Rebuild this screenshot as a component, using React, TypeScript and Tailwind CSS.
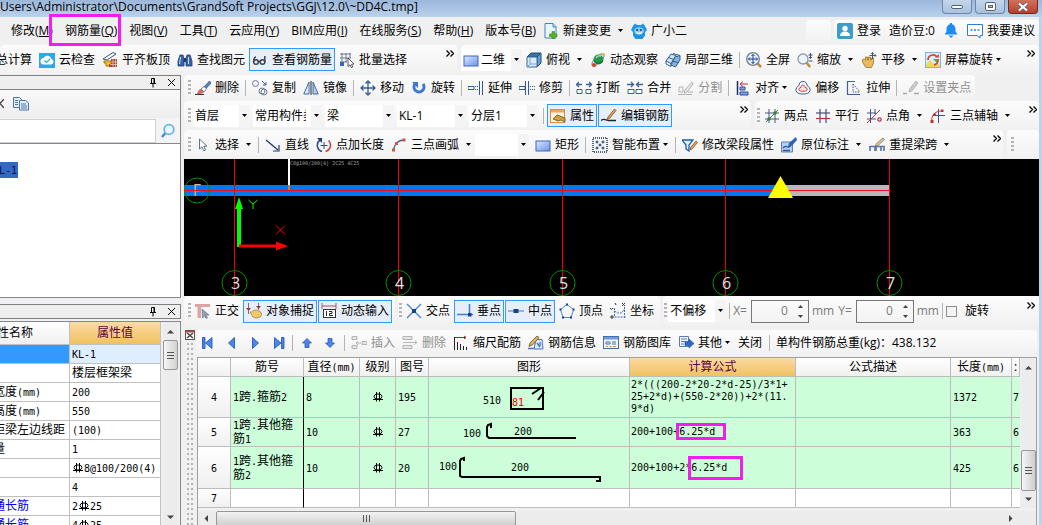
import type { ReactNode } from "react";

const NAVY = "#34507f";

// 16x16 toolbar drawings
const ICONS: Record<string, ReactNode> = {
  cloudCheck: (
    <>
      <rect width="16" height="15" y="1" fill="#2fa9e6" />
      <path d="M4 12.5h8a2.8 2.8 0 0 0 .4-5.5A4.2 4.2 0 0 0 4.6 6 3.3 3.3 0 0 0 4 12.5z" fill="#fff" />
      <path d="M5.5 8.5l2 2 3.5-3.5" fill="none" stroke="#2fa9e6" strokeWidth="1.2" />
    </>
  ),
  slab: (
    <>
      <path d="M1 7L11 .500l3 1.500L5 8z" fill="#fff" stroke={NAVY} />
      <path d="M2 9h7v5H4V11H2z" fill="#f2c233" stroke="#a87400" />
      <path d="M9 7h6v8H7v-3h2z" fill="#a8452f" />
      <path d="M9 10h6M8 12.500h7M11 7v8M13.500 7v8" stroke="#f0d5c5" strokeWidth=".7" />
    </>
  ),
  binoculars: (
    <>
      <path d="M3 3h3l1 4v7H1V9zM10 3h3l2 6v5H9V7z" fill="#3a64a8" stroke="#1f3a6e" strokeWidth=".8" />
      <path d="M7 6h2v4H7z" fill="#1f3a6e" />
      <path d="M3.500 5L2.500 12M11.500 5v7" stroke="#c9dcf7" />
    </>
  ),
  glasses: (
    <g fill="none" stroke="#3c4350" strokeWidth="1.500">
      <circle cx="4" cy="10" r="2.300" />
      <circle cx="10.500" cy="10" r="2.300" />
      <path d="M1.700 10C1.500 7 2.500 5 4 5M12.800 10.500V4M6.300 9.500h2" />
    </g>
  ),
  batch: (
    <>
      <path d="M1 2h11M1 6h11M1 10h7M3 1v13M7 1v9M11 1v5" stroke="#6e7b92" fill="none" />
      <path d="M1 10h4v4H1z" fill="#3c62c8" />
      <path d="M9 6l6 6-2.500.3 1.200 2.700-1.500.5-1.200-2.700L9 14.500z" fill="#fff" stroke="#333" strokeWidth=".8" />
    </>
  ),
  rect: (
    <>
      <defs>
        <linearGradient id="rectFill" x1="0" y1="0" x2="1" y2="1">
          <stop offset="0" stopColor="#dbe8ff" />
          <stop offset="1" stopColor="#6d93e8" />
        </linearGradient>
      </defs>
      <rect x="1" y="4" width="14" height="10" fill="url(#rectFill)" stroke="#4065bb" />
    </>
  ),
  cube: (
    <>
      <path d="M1 5l4-4h10L11 5z" fill="#3b72a8" stroke="#1c4f82" />
      <path d="M11 5l4-4v10l-4 4z" fill="#6a9cc9" stroke="#1c4f82" />
      <path d="M1 5h10v10H1z" fill="#d9ebf9" stroke="#356a9f" />
      <path d="M4 5v7h7M4 12l-3 3" stroke="#7fa7cc" fill="none" />
    </>
  ),
  orbit: (
    <>
      <ellipse cx="8" cy="8" rx="8" ry="3" transform="rotate(-45 8 8)" fill="none" stroke="#8f9aa5" />
      <circle cx="8.500" cy="7.500" r="5" fill="#27964c" />
      <path d="M6 6c1-2 3-2.500 5-2" stroke="#9be0ae" strokeWidth="1.500" fill="none" />
      <circle cx="4" cy="13" r="2" fill="#d2402e" />
      <circle cx="13.500" cy="2.500" r="1.500" fill="#e8b83a" />
      <path d="M4 9c2 3 6 3 9 0" stroke="#0d5d2a" fill="none" />
    </>
  ),
  local3d: (
    <g stroke="#2d5f8f" fill="#cfe3f4">
      <path d="M1 9l5-7 5 1.500-5 8z" />
      <path d="M6 13l4-8 5-1.500V8l-4.500 7z" fill="#8ab2d8" />
      <path d="M3.500 5.500l5 2M1 9v3l5 2.500V11.500M8 1.500l7 2M8 9.500l6 1" fill="none" />
    </g>
  ),
  zoomAll: (
    <>
      <path d="M11.500 11.500L15 15" stroke="#c28b3a" strokeWidth="2.500" />
      <circle cx="7" cy="7" r="6.300" fill="#e6effa" stroke="#6f7d91" strokeWidth="1.300" />
      <path d="M7 2.500v9M2.500 7h9M5.500 4L7 2.500 8.500 4M5.500 10L7 11.500 8.500 10M4 5.500L2.500 7 4 8.500M10 5.500L11.500 7 10 8.500" stroke="#1f3f94" fill="none" />
    </>
  ),
  zoom: (
    <>
      <path d="M9.500 10.500L13 15" stroke="#c28b3a" strokeWidth="2.500" />
      <circle cx="6" cy="7" r="5" fill="#eef5fc" stroke="#909bab" strokeWidth="1.300" />
      <path d="M13.500 1v5M11.500 3h4M11.500 9h4M12 5l1.500 1.500L15 5" stroke="#34507f" fill="none" />
    </>
  ),
  hand: (
    <>
      <path d="M1 8l2-1 1.500 1V5h2v3h1V5h2v3h1V6h2v5l-2 4.500H5L2 11z" fill="#e6bb62" stroke="#9b7227" strokeWidth=".8" />
      <path d="M11.500 .500V7M8.500 3.500h6.500M10.200 2L11.500.500 12.800 2M13.700 2.200L15 3.500l-1.300 1.300" stroke="#46546d" fill="none" />
    </>
  ),
  screenRotate: (
    <>
      <rect x=".500" y=".500" width="15" height="15" fill="#d7efff" stroke="#79b8dc" />
      <path d="M1 12l4-4 4 4 3-2 3 3v2H1z" fill="#f4d564" />
      <path d="M3 8a5 5 0 0 1 9-3M13 7a5 5 0 0 1-4 6" stroke="#df4030" strokeWidth="1.800" fill="none" />
      <path d="M10 5.500h4V2z" fill="#df4030" />
      <path d="M8 7h4v4z" fill="#54a84c" />
    </>
  ),
  newDoc: (
    <>
      <path d="M2 .500h8l3 3V15H2z" fill="#eaf4fd" stroke="#3e8ab8" />
      <path d="M10 .500V4h3" fill="#bcdcf1" stroke="#3e8ab8" />
      <path d="M9 8.500h2.500V11H14v2.500h-2.500V16H9v-2.500H6.500V11H9z" fill="#58b324" stroke="#3b8614" strokeWidth=".6" />
    </>
  ),
  mascot: (
    <>
      <path d="M4 .500l2 1.500h4L12 .500l2 2.500 2 4-2 2v3.500L11.500 16h-7L2 12.500V9L0 7l2-4z" fill="#1f93e6" />
      <ellipse cx="8" cy="8" rx="4.800" ry="3.800" fill="#8fd0fa" />
      <circle cx="6.200" cy="7" r="1.100" fill="#0e3f6e" />
      <circle cx="9.800" cy="7" r="1.100" fill="#0e3f6e" />
      <path d="M5.500 9.300c1 1.500 4 1.500 5 0" stroke="#fff" strokeWidth="1.200" fill="none" />
    </>
  ),
  user: (
    <>
      <rect width="16" height="16" rx="2" fill="#3f9bcb" />
      <circle cx="8" cy="5.500" r="2.700" fill="#fff" />
      <path d="M3 13c0-3 2-4.500 5-4.500s5 1.500 5 4.500z" fill="#fff" />
    </>
  ),
  bell: <path d="M8 0c.9 0 1.200.6 1.200 1.200C11.500 2 12.500 4 12.500 6.500v2L14.500 11.500h-13L3.500 8.500v-2C3.500 4 4.500 2 6.800 1.200 6.800.6 7.100 0 8 0zM5.500 12.500h5L8 15z" fill="#1e8bf3" />,
  comment: (
    <>
      <path d="M.500 1.500h15v11H13V15l-3-2.500H.500z" fill="#fff" stroke="#2d7dd2" />
      <path d="M3.500 7h2M7 7h2M10.500 7h2" stroke="#2d7dd2" strokeWidth="1.300" />
    </>
  ),
  brush: (
    <>
      <path d="M14.500 1L9 7l2 1.500L16 3z" fill="#4f7fc4" stroke="#2b4c86" strokeWidth=".7" />
      <path d="M9 6.500L6 9l3 3 2.500-3.500z" fill="#fff" stroke="#2b4c86" strokeWidth=".7" />
      <path d="M6 9c-2 0-3 2-4 5 3 0 6 0 7-2z" fill="#d46a63" />
      <path d="M0 14.500h9" stroke="#333" />
    </>
  ),
  copy2: (
    <>
      <circle cx="3.500" cy="3.500" r="3" fill="#f3f6fa" stroke="#6d7b90" />
      <circle cx="10" cy="11" r="3" fill="#f3f6fa" stroke="#6d7b90" />
      <circle cx="12" cy="12" r="3" fill="none" stroke="#6d7b90" />
      <path d="M10 1l4 4M14 2v3h-3" stroke="#2b5bb0" fill="none" />
    </>
  ),
  mirror: (
    <g stroke="#3f6aa5" fill="none">
      <path d="M6 2v12H.800z" fill="#e3edf9" />
      <path d="M10 2v12h5.200z" fill="#b7cdeb" />
      <path d="M8 1v14" stroke="#222" />
    </g>
  ),
  move: <path d="M8 1v14M1 8h14M5.500 3.500L8 1l2.500 2.500M5.500 12.500L8 15l2.500-2.500M3.500 5.500L1 8l2.500 2.500M12.500 5.500L15 8l-2.500 2.500" stroke="#3a5d8f" strokeWidth="1.300" fill="none" />,
  rotate: (
    <>
      <path d="M4 4a5 5 0 1 0 8 0" stroke="#3a78d6" strokeWidth="3" fill="none" />
      <path d="M1 2h6v6z" fill="#3a78d6" />
    </>
  ),
  extend: (
    <>
      <path d="M0 6.500h6v3H0z" fill="#fff" stroke="#2f5c99" />
      <path d="M7 6.500h4M7 9.500h4" stroke="#2f5c99" strokeDasharray="1 1" />
      <path d="M11.500 1v14M14.500 1v14" stroke="#2f5c99" />
    </>
  ),
  trim: (
    <>
      <path d="M0 6.500h6v3H0z" fill="#fff" stroke="#2f5c99" />
      <path d="M6.500 1v14M9.500 1v14" stroke="#2f5c99" />
      <path d="M11 6.500h5M11 9.500h5" stroke="#2f5c99" strokeDasharray="1 1" />
    </>
  ),
  breakIcon: (
    <g stroke="#3f6297" fill="none">
      <path d="M1 9.500h5v4H1zM10 9.500h5v4h-5z" fill="#fff" />
      <path d="M0 4.500h6M10 4.500h6M3 2L.500 4.500 3 7M13 2l2.500 2.500L13 7" strokeWidth="1.300" />
    </g>
  ),
  merge: (
    <g stroke="#3f6297" fill="none">
      <path d="M1 9.500h6v4H1zM9 9.500h6v4H9z" fill="#fff" />
      <path d="M0 4.500h6M10 4.500h6M4 2l2.500 2.500L4 7M12 2L9.500 4.500 12 7" strokeWidth="1.300" />
    </g>
  ),
  split: (
    <g stroke="#b3b3b3" fill="none">
      <path d="M1 7h4v5H1zM10 12h5M0 14.500h14" />
      <path d="M14 2L7 10l-1 3 3-1 6-8z" fill="#e8e8e8" />
    </g>
  ),
  align: (
    <>
      <path d="M2.500 1v14" stroke="#1e2c63" strokeWidth="1.500" />
      <path d="M5 7h5v3H5zM5 12h8v3H5z" fill="#7da4e4" stroke="#2e4fa3" />
      <path d="M13 4H5M8 1.500L5 4l3 2.500" stroke="#c4303a" fill="none" />
    </>
  ),
  offset: (
    <>
      <path d="M8 1.500c3 0 4 2 4 4 2 1 3.500 3 3 5-.5 3-4 3.500-7 3.500s-6.500-.5-7-3.500c-.4-2 1-4 3-5 0-2 1-4 4-4z" fill="#f5f8fc" stroke="#3d5f9c" />
      <path d="M8 5c1.500 0 2 1.500 2 2.500 1.500 0 2.500 1 2 2.500-.3 1-2 1.300-4 1.300S4.300 11 4 10c-.4-1.500.5-2.500 2-2.500C6 6.500 6.500 5 8 5z" fill="#fbe3df" stroke="#d0402f" />
    </>
  ),
  stretch: (
    <>
      <path d="M9 1.500H1.500v13H14" stroke="#3d5f9c" strokeWidth="1.200" fill="none" />
      <path d="M7 4v8h7M7 4l7 8" stroke="#3d5f9c" strokeDasharray="1.500 1" fill="none" />
    </>
  ),
  grip: (
    <>
      <path d="M0 13.500h4M11 13.500h5" stroke="#a9a9a9" strokeWidth="1.500" />
      <path d="M13 1l2 2-6 8-3 1 .500-3z" fill="#c9c9c9" stroke="#a9a9a9" strokeWidth=".7" />
    </>
  ),
  props: (
    <>
      <rect x=".500" y="1.500" width="14" height="13" fill="#fff4e5" stroke="#e28b3a" />
      <path d="M1 2h13v2.500H1z" fill="#f1a55a" />
      <path d="M3 11l4-4 3 1 5 2v4l-4-2-3 1z" fill="#c9a23c" stroke="#6b5216" strokeWidth=".8" />
    </>
  ),
  editBar: (
    <>
      <path d="M0 12.500c3-3 5 0 8 0h7" stroke="#222" strokeWidth="1.300" fill="none" />
      <path d="M13.500 1l1.500 1.500L9 10l-3 1.500L7 9z" fill="#e0a25a" stroke="#74431b" strokeWidth=".7" />
    </>
  ),
  axisTwo: (
    <>
      <path d="M1 5h14M1 11h14M5 1v14M11 1v14" stroke="#4a5a86" />
      <path d="M2 14L14 2" stroke="#3a7d34" />
      <circle cx="5" cy="11" r="1.700" fill="#3a7d34" />
      <circle cx="11" cy="5" r="1.700" fill="#3a7d34" />
    </>
  ),
  axisParallel: (
    <>
      <path d="M5 1v14M11 1v14" stroke="#3b538a" strokeWidth="1.200" />
      <path d="M1 5h14" stroke="#3b538a" strokeWidth="1.200" />
      <path d="M1 10.500h14" stroke="#b6323a" strokeWidth="1.200" />
    </>
  ),
  axisAngle: (
    <>
      <path d="M1 5h9M1 11h9M4.500 1v14M9 1v5" stroke="#3b538a" />
      <path d="M1 15L14 2" stroke="#b6323a" />
      <circle cx="13.500" cy="11.500" r="1.700" fill="none" stroke="#c4303a" strokeWidth="1.300" />
    </>
  ),
  axisArc: (
    <>
      <path d="M8.500 1v14M3 7.500h12" stroke="#3b538a" />
      <path d="M2 13c-1-6 3-10 10-10" stroke="#c4303a" fill="none" />
      <path d="M.500 12h3v3h-3zM11 1.500h2.500V4H11zM3.500 5.500H6V8H3.500z" fill="#c4303a" />
    </>
  ),
  pointer: <path d="M4.500 2v10l2.500-2.200 1.700 4 1.800-.8L8.800 9.200H12z" fill="#fff" stroke="#5b6e94" />,
  line: (
    <>
      <path d="M1 3l12 10" stroke="#1f3b7c" strokeWidth="1.400" />
      <path d="M14 8v6H8" stroke="#1f3b7c" fill="none" strokeWidth="1.200" />
    </>
  ),
  pointLen: (
    <>
      <path d="M4 3a6.500 6.500 0 0 0 2 11.500" stroke="#2d4f93" strokeWidth="1.600" fill="none" />
      <path d="M12.500 3.500a6.500 6.500 0 0 1-3 11" stroke="#c4474a" strokeWidth="1.600" fill="none" />
      <path d="M1 1h5v5z" fill="#1f3b7c" />
      <path d="M8 5v7M4.500 8.500h7" stroke="#34507f" />
    </>
  ),
  arc3: (
    <>
      <path d="M2.500 13C3 8 7 3 13 3" stroke="#46639a" strokeWidth="1.300" fill="none" />
      <path d="M1 11.500h3v3H1zM4 5h3v3H4zM11.500 1.500h3v3h-3z" fill="#d2553f" />
    </>
  ),
  smart: (
    <>
      <rect x="1" y="1" width="14" height="14" fill="#f4f8ff" stroke="#1d2c54" strokeDasharray="1 1" strokeWidth="1.500" />
      <path d="M5 3.500v3M3.500 5h3M11 3.500v3M9.500 5h3M5 9.500v3M3.500 11h3M11 9.500v3M9.500 11h3M8 6.500v3M6.500 8h3" stroke="#1d2c54" />
    </>
  ),
  beamEdit: (
    <>
      <path d="M0 3h11L7 8v6l-3-2V8z" fill="#dff0fb" stroke="#1f5fa8" strokeWidth="1.300" />
      <path d="M14 4l1.500 1.500L10 12l-2 1 .500-2.500z" fill="#e0a25a" stroke="#74431b" strokeWidth=".7" />
    </>
  ),
  inPlace: (
    <>
      <path d="M.500 5h11v10H.500z" fill="#b9cff0" stroke="#5c7fb8" />
      <path d="M2 11c3-4 4 1 8-2M2 13.500h7" stroke="#2b57a5" strokeWidth="1.400" fill="none" />
      <path d="M15 0L8 6l-1 4 4-1.500L16 3z" fill="#2f64b5" />
    </>
  ),
  respan: (
    <>
      <path d="M1 14V9.500h5V14M7 14V9.500h5V14M12 9.500h3V14" stroke="#5874a8" strokeWidth="1.600" fill="none" />
      <path d="M14 1l1.500 1.500L9 8.500 6.500 9l.800-2.300z" fill="#d9c7a1" stroke="#7b6a48" strokeWidth=".7" />
    </>
  ),
  ortho: (
    <>
      <path d="M0 1h15v3H6v11H2.500V4H0z" fill="#dfa3a3" />
      <path d="M7 6l7 6-3 .300 1.500 2.500-1.500.700L9.700 13 7.500 15z" fill="#8fa0b5" stroke="#5b6c84" strokeWidth=".6" />
    </>
  ),
  snap: (
    <>
      <path d="M2.500 0v11M12.500 0v7" stroke="#b05a5a" />
      <path d="M0 5h5l-2.500 3zM10 3h5l-2.500 3z" fill="#8e3f46" />
      <path d="M4 9c2 1 3-2 5-2 3 0 3 1 5 1.500 2.500 1.500 2 5-1 6-3 1-6 .5-7-2z" fill="#efca69" stroke="#a07a27" strokeWidth=".7" />
    </>
  ),
  dynInput: (
    <>
      <path d="M1 0v6M15 0v6M1 3h14" stroke="#b0585c" />
      <rect x="2.500" y="6.500" width="12" height="8" fill="#fff" stroke="#333" />
      <path d="M5.500 8v5M8 8.500h3v2H8.500v2H12" stroke="#222" fill="none" />
    </>
  ),
  cross: (
    <>
      <path d="M1 1l14 14M15 1L1 15" stroke="#3f7fd0" strokeWidth="1.200" />
      <rect x="6" y="6" width="4" height="4" fill="#15418f" />
    </>
  ),
  perp: (
    <>
      <path d="M0 11.500h16M12.500 1v11" stroke="#3f7fd0" strokeWidth="1.500" />
      <rect x="11" y="10" width="3.500" height="3.500" fill="#15418f" />
    </>
  ),
  mid: (
    <>
      <path d="M0 8h16" stroke="#6fa1df" strokeWidth="1.500" />
      <rect x="5.500" y="6" width="5" height="4" fill="#15418f" />
    </>
  ),
  vertex: (
    <>
      <path d="M8 1.500l6.500 5L12 14.500H4L1.500 6.500z" fill="none" stroke="#4a8ad0" />
      <path d="M7 .500h2v2H7zM.500 5.500h2v2h-2zM13.500 5.500h2v2h-2zM3 13.500h2v2H3zM11 13.500h2v2h-2z" fill="#15418f" />
    </>
  ),
  coord: (
    <>
      <path d="M4.500 5v9H16M4.500 8l3 2h4l3-4M14.500 4v11" stroke="#3f6fb5" fill="none" strokeDasharray="2 1" />
      <path d="M5 0l1 2M12 0l3 3M15 0l-3 3M0 5l1.500 1.500L3 5M1 13h2v2H1z" stroke="#333" fill="none" />
    </>
  ),
  insert: (
    <g stroke="#b5b5b5" fill="#e5e5e5">
      <path d="M1 1.500h5v3H1zM1 10.500h5v3H1zM11 6.500h5v3h-5z" />
      <path d="M10 8H5M7 6L5 8l2 2" fill="none" />
    </g>
  ),
  removeRow: (
    <g stroke="#b5b5b5" fill="#e5e5e5">
      <path d="M1 1.500h9v3H1zM1 10.500h9v3H1z" />
      <path d="M1 7.500h14M12.500 5.500l2.500 2-2.500 2" fill="none" />
    </g>
  ),
  scaleBar: (
    <>
      <path d="M1 2.500h12M11 1l2 1.500L11 4" stroke="#8e2f2f" fill="none" />
      <path d="M1.500 2v13M4.500 7v8M7.500 9v6M10.500 11v4M13.500 12v3" stroke="#222" />
    </>
  ),
  barInfo: (
    <>
      <path d="M8 4.500h6l1 9.500H6z" fill="#dbe8fb" stroke="#4b76bd" />
      <path d="M9 1l2 1.500-6 7L1 11.500 2 8z" fill="#e5b562" stroke="#6b4e20" strokeWidth=".8" />
      <path d="M0 13.500h6M9 8l3 4M12 7v4" stroke="#4b76bd" strokeWidth="1.300" />
    </>
  ),
  library: (
    <>
      <rect x=".500" y="1.500" width="15" height="12" fill="#f1f6fd" stroke="#4470b5" />
      <path d="M1 2h14v2.500H1z" fill="#6f9ade" />
      <path d="M3 7h4v2H3zM9 7h4M9 9h4" stroke="#4470b5" fill="none" />
      <path d="M3 11.500h2M6.500 11.500h2M10 11.500h3" stroke="#d28c3a" />
    </>
  ),
  other: (
    <>
      <path d="M1.500 1.500h9v10h-9z" fill="#f1f6fd" stroke="#5b7db5" />
      <path d="M3 4h6M3 6.500h4M3 9h3" stroke="#5b7db5" />
      <path d="M7 6.500h4V4l5 4.500-5 4.500v-2.500H7z" fill="#2e68c9" stroke="#1c4a9b" strokeWidth=".6" />
    </>
  ),
  first: <path d="M1.500 2.500H4v11H1.500zM11 2.500v11L4.500 8z" fill="#4a86ec" stroke="#1b4cae" strokeWidth=".8" />,
  prev: <path d="M10.500 2.500v11L4.500 8z" fill="#4a86ec" stroke="#1b4cae" strokeWidth=".8" />,
  next: <path d="M5.500 2.500v11l6-5.500z" fill="#4a86ec" stroke="#1b4cae" strokeWidth=".8" />,
  last: <path d="M11.500 2.500H14v11h-2.500zM4.500 2.500v11L11 8z" fill="#4a86ec" stroke="#1b4cae" strokeWidth=".8" />,
  up: <path d="M8 3.500l4.500 4.500H10v4.500H6V8H3.500z" fill="#4a86ec" stroke="#1b4cae" strokeWidth=".7" />,
  down: <path d="M8 12.500L3.500 8H6V3.500h4V8h2.500z" fill="#4a86ec" stroke="#1b4cae" strokeWidth=".7" />,
  copyDoc: (
    <g fill="#e4eefb" stroke="#4b74ad">
      <path d="M.500 1.500h6l2 2v8h-8z" />
      <path d="M6.500 4.500h6l3 2.500v7h-9z" />
      <path d="M8 8h5M8 10h6M8 12h6M2 4.500h3M2 6.500h3M2 8.500h3" />
    </g>
  ),
  search: (
    <>
      <path d="M5.500 10L2 14" stroke="#3e8ed0" strokeWidth="2.500" />
      <circle cx="9" cy="6.500" r="4.800" fill="#e9f6ff" stroke="#6db3e6" strokeWidth="1.800" />
    </>
  ),
};

const Icon = ({ name }: { name: string }) => (
  <svg width="16" height="16" viewBox="0 0 16 16" className="shrink-0" aria-hidden="true">
    {ICONS[name]}
  </svg>
);

const Arrow = ({ className = "" }: { className?: string }) => (
  <svg width="7" height="4" viewBox="0 0 7 4" className={`shrink-0 ${className}`} aria-hidden="true">
    <path d="M1 0h5L3.500 3z" fill="#000" />
  </svg>
);

type ToolProps = { icon: string; label: string; arrow?: "wide" | "tight"; on?: boolean; off?: boolean };

function Tool({ icon, label, arrow, on, off }: ToolProps) {
  return (
    <button
      type="button"
      disabled={off}
      aria-pressed={on}
      className={`flex shrink-0 items-center gap-1 whitespace-nowrap ${
        on ? "-mx-[3px] h-[23px] border border-[#3399ff] bg-[#e5eef9] px-[2px]" : ""
      } ${off ? "text-[#8f8f8f]" : ""}`}
    >
      <Icon name={icon} />
      {label}
      {arrow === "wide" && <Arrow className="ml-[2px]" />}
      {arrow === "tight" && <Arrow className="-ml-[2px]" />}
    </button>
  );
}

const IconButton = ({ icon, label }: { icon: string; label: string }) => (
  <button type="button" aria-label={label} className="shrink-0">
    <Icon name={icon} />
  </button>
);

const Sep = () => <span className="-mx-px h-4 w-px shrink-0 bg-[#b4b4b4]" />;

const Grip = () => (
  <span className="-mr-[3px] h-4 w-[3px] shrink-0 bg-[repeating-linear-gradient(to_bottom,#b4b4b4_0,#b4b4b4_2px,transparent_2px,transparent_4px)]" />
);

const More = () => (
  <button type="button" aria-label="More" className="mb-3 ml-auto shrink-0">
    <svg width="8" height="7" viewBox="0 0 8 7" aria-hidden="true">
      <path d="M.500.500l3 3-3 3M4.500.500l3 3-3 3" fill="none" stroke="#000" strokeWidth="1.300" />
    </svg>
  </button>
);

const Strip = ({ children, className = "gap-[7px]" }: { children?: ReactNode; className?: string }) => (
  <div className={`flex items-center rounded-sm bg-linear-to-b from-[#fcfcfc] to-[#f1f1f1] ${className}`}>
    {children}
  </div>
);

function Combo({ value, label, className }: { value: string; label: string; className: string }) {
  return (
    <span className={`relative flex h-[22px] shrink-0 items-center bg-white ${className}`}>
      <select
        aria-label={label}
        defaultValue={value}
        className="h-full w-full appearance-none overflow-hidden bg-transparent pr-4 pl-[2px] outline-none"
      >
        <option>{value}</option>
      </select>
      <span className="pointer-events-none absolute inset-y-0 right-0 flex w-[11px] items-center justify-center bg-[#f4f4f4]">
        <Arrow />
      </span>
    </span>
  );
}

// rebar grade mark used in front of diameters
const Grade = () => (
  <svg width="12" height="10" viewBox="0 0 12 10" className="inline-block align-[-1px]" role="img" aria-label="HRB400">
    <path d="M4.500 0v9.500M7.500 0v9.500M1 7.500h10" stroke="#000" fill="none" />
    <ellipse cx="6" cy="4.500" rx="4" ry="2.500" fill="none" stroke="#000" />
  </svg>
);

// grid text: 12px Chinese beside half-width Latin, "#" stands for the grade mark
function GridText({ text }: { text: string }) {
  return (
    <>
      {text.split(/([\x21\x22\x24-\x7e]+|#)/).map((part, i) => {
        if (part === "#") return <Grade key={i} />;
        if (/^[\x20-\x7e]+$/.test(part))
          return (
            <span key={i} className="font-['DejaVu_Sans_Mono',monospace] text-[10px] leading-3">
              {part}
            </span>
          );
        return part;
      })}
    </>
  );
}

const MENUS: [string, string][] = [
  ["修改", "M"],
  ["钢筋量", "Q"],
  ["视图", "V"],
  ["工具", "T"],
  ["云应用", "Y"],
  ["BIM应用", "I"],
  ["在线服务", "S"],
  ["帮助", "H"],
  ["版本号", "B"],
];

function TitleBar() {
  return (
    <header className="flex h-[17px] shrink-0 items-start justify-between bg-linear-to-b from-[#9bb7da] to-[#b9d1ec] leading-[14px]">
      <h1 className="whitespace-nowrap">Users\Administrator\Documents\GrandSoft Projects\GGJ\12.0\~DD4C.tmp]</h1>
      <div className="mr-1 flex gap-[3px]">
        <button type="button" aria-label="Minimize" className="flex h-[14px] w-[30px] items-center justify-center rounded-b-sm border border-t-0 border-[#6f86a6] bg-linear-to-b from-[#c4d6ea] to-[#a9c2df]">
          <span className="h-1 w-3 rounded-xs border border-[#566171] bg-white" />
        </button>
        <button type="button" aria-label="Restore" className="flex h-[14px] w-[30px] items-center justify-center rounded-b-sm border border-t-0 border-[#6f86a6] bg-linear-to-b from-[#c4d6ea] to-[#a9c2df]">
          <span className="flex h-[9px] w-[11px] items-center justify-center rounded-xs border border-[#566171] bg-white">
            <span className="h-[3px] w-[5px] border border-[#566171] bg-[#a9c2df]" />
          </span>
        </button>
        <button type="button" aria-label="Close" className="flex h-[14px] w-[30px] items-center justify-center rounded-b-sm border border-t-0 border-[#6b2a22] bg-linear-to-b from-[#d0705c] to-[#b8402a]">
          <svg width="12" height="10" viewBox="0 0 12 10" aria-hidden="true">
            <path d="M2 1.500l8 7M10 1.500l-8 7" stroke="#566171" strokeWidth="3.600" />
            <path d="M2 1.500l8 7M10 1.500l-8 7" stroke="#fff" strokeWidth="2.200" />
          </svg>
        </button>
      </div>
    </header>
  );
}

function MenuBar() {
  return (
    <nav className="flex h-7 shrink-0 items-center gap-[7px] pl-[11px]">
      <div className="flex shrink-0 gap-3">
        {MENUS.map(([label, key]) => (
          <button key={key} type="button" className="relative shrink-0 whitespace-nowrap">
            {label}(<u>{key}</u>)
            {key === "Q" && (
              <span className="pointer-events-none absolute -top-[9px] -right-1 -bottom-[7px] -left-4 z-10 border-[3px] border-[#f41df0]" />
            )}
          </button>
        ))}
      </div>
      <Tool icon="newDoc" label="新建变更" arrow="wide" />
      <Tool icon="mascot" label="广小二" />
      <div className="ml-auto flex gap-[3px]">
        <Strip className="h-[23px] w-[25px]" />
        <Strip className="h-[23px] gap-2 pr-1 pl-[3px]">
          <Tool icon="user" label="登录" />
          <span className="whitespace-nowrap">造价豆:0</span>
          <IconButton icon="bell" label="消息" />
          <Tool icon="comment" label="我要建议" />
        </Strip>
      </div>
    </nav>
  );
}

function MainToolbar() {
  return (
    <div className="flex h-[29px] shrink-0 gap-1">
      <Strip className="w-[457px] shrink-0 gap-[7px] pr-[3px]">
        <button type="button" className="-ml-1 shrink-0 whitespace-nowrap">
          总计算
        </button>
        <Tool icon="cloudCheck" label="云检查" />
        <Tool icon="slab" label="平齐板顶" />
        <Tool icon="binoculars" label="查找图元" />
        <Tool icon="glasses" label="查看钢筋量" on />
        <Tool icon="batch" label="批量选择" />
        <More />
      </Strip>
      <Strip className="flex-1 gap-[7px] pr-1">
        <span className="relative -mr-[3px] flex h-[23px] shrink-0 items-center bg-white pl-[2px]">
          <Icon name="rect" />
          <Combo label="视图模式" value="二维" className="w-[43px]" />
        </span>
        <Tool icon="cube" label="俯视" arrow="wide" />
        <Tool icon="orbit" label="动态观察" />
        <Tool icon="local3d" label="局部三维" />
        <Sep />
        <Tool icon="zoomAll" label="全屏" />
        <Tool icon="zoom" label="缩放" arrow="wide" />
        <Tool icon="hand" label="平移" arrow="wide" />
        <Tool icon="screenRotate" label="屏幕旋转" arrow="tight" />
        <More />
      </Strip>
    </div>
  );
}

const PanelHeader = () => (
  <div className="flex h-[15px] shrink-0 items-center justify-end gap-[10px] border border-l-0 border-[#7f7f7f] bg-[#efefef] pr-1">
    <button type="button" aria-label="Pin">
      <svg width="8" height="10" viewBox="0 0 8 10" aria-hidden="true">
        <path d="M2.500.500h3v5h-3zM5 .500v5M1 5.500h6M4 6v3.500" stroke="#000" fill="none" />
      </svg>
    </button>
    <button type="button" aria-label="Close panel">
      <svg width="9" height="9" viewBox="0 0 9 9" aria-hidden="true">
        <path d="M1 1l7 7M8 1L1 8" stroke="#000" fill="none" />
      </svg>
    </button>
  </div>
);

const ThumbLines = ({ vertical }: { vertical?: boolean }) => (
  <svg width="9" height="9" viewBox="0 0 9 9" aria-hidden="true">
    <path d={vertical ? "M1 1.500h7M1 4.500h7M1 7.500h7" : "M1.500 1v7M4.500 1v7M7.500 1v7"} stroke="#555" />
  </svg>
);

const Caret = ({ d }: { d: string }) => (
  <svg width="7" height="7" viewBox="0 0 7 7" aria-hidden="true">
    <path d={d} fill="#444" />
  </svg>
);

const PROPS: { name: string; value: string; blue?: boolean; picked?: boolean }[] = [
  { name: "", value: "KL-1", picked: true },
  { name: "", value: "楼层框架梁" },
  { name: "宽度(mm)", value: "200" },
  { name: "高度(mm)", value: "550" },
  { name: "距梁左边线距", value: "(100)" },
  { name: "量", value: "1" },
  { name: "", value: "#8@100/200(4)" },
  { name: "", value: "4" },
  { name: "通长筋", value: "2#25", blue: true },
  { name: "通长筋", value: "4#25", blue: true },
];

function LeftPanels() {
  return (
    <aside className="mr-[3px] flex w-[181px] shrink-0 flex-col overflow-hidden">
      <PanelHeader />
      <div className="flex h-[28px] shrink-0 items-center gap-[9px] border-r border-[#828790] bg-linear-to-b from-[#f9f9f9] to-[#eee]">
        <button type="button" aria-label="删除" className="w-1 overflow-hidden">
          <svg width="4" height="10" viewBox="0 0 4 10" aria-hidden="true">
            <path d="M-4 0l8 9M4 0l-8 9" stroke="#444" fill="none" strokeWidth="1.300" />
          </svg>
        </button>
        <IconButton icon="copyDoc" label="复制" />
      </div>
      <div className="flex h-[25px] shrink-0 items-center border-r border-[#828790] bg-[#f4f4f4]">
        <input aria-label="搜索构件" className="h-6 min-w-0 flex-1 border-y border-r border-[#d0d0d0] bg-white" />
        <span className="flex w-6 justify-center">
          <IconButton icon="search" label="搜索" />
        </span>
      </div>
      <div className="h-[155px] shrink-0 border border-l-0 border-[#828790] bg-white pt-[18px]">
        <div className="h-4 w-[18px] bg-[#316ac5] leading-4 text-[#0a0f40]">
          <span className="-ml-px">
            <GridText text="L-1" />
          </span>
        </div>
      </div>
      <div className="h-[6px] shrink-0" />
      <PanelHeader />
      <div className="mt-[2px] flex min-h-0 flex-1 border-t border-r border-[#828790]">
        <div className="min-w-0 flex-1 overflow-hidden bg-white">
          <table className="w-full table-fixed border-separate border-spacing-0 leading-[14px]">
            <colgroup>
              <col className="w-[70px]" />
              <col />
            </colgroup>
            <thead>
              <tr className="h-[23px] text-center">
                <th className="border-r border-b border-[#c0c0c0] bg-linear-to-b from-white to-[#f0f0f0] p-0 font-normal whitespace-nowrap">
                  <span className="-ml-[3px] block text-left">性名称</span>
                </th>
                <th className="border-r border-b border-[#c0c0c0] bg-linear-to-b from-[#fbdba1] to-[#f1c15f] p-0 font-normal text-[#5c0045]">
                  属性值
                </th>
              </tr>
            </thead>
            <tbody>
              {PROPS.map((row, i) => (
                <tr key={i} className="h-[19px]">
                  <td
                    className={`overflow-hidden border-r border-b border-[#c0c0c0] p-0 whitespace-nowrap ${
                      row.picked ? "bg-[#3399ff]" : ""
                    } ${row.blue ? "text-[#0000f0]" : ""}`}
                  >
                    <span className="-ml-[7px] block">
                      <GridText text={row.name} />
                    </span>
                  </td>
                  <td
                    className={`border-r border-b border-[#c0c0c0] py-0 pl-[2px] whitespace-nowrap ${
                      row.picked ? "bg-[#deeeff]" : ""
                    }`}
                  >
                    <GridText text={row.value} />
                  </td>
                </tr>
              ))}
            </tbody>
          </table>
        </div>
        <div className="mr-[2px] ml-[2px] flex w-[15px] flex-col items-center bg-[#ececec]">
          <span className="flex h-[18px] items-center">
            <Caret d="M3.500 2L7 5.500H0z" />
          </span>
          <span className="flex h-[30px] w-full items-center justify-center rounded-xs border border-[#979797] bg-linear-to-r from-[#f5f5f5] to-[#d2d2d2]">
            <ThumbLines vertical />
          </span>
          <span className="mt-auto mb-1">
            <Caret d="M3.500 5L0 1.500h7z" />
          </span>
        </div>
      </div>
    </aside>
  );
}

function EditToolbars() {
  return (
    <>
      <Strip className="mt-px h-[26px] w-[791px] max-w-full gap-[7px] pl-1">
        <Grip />
        <Tool icon="brush" label="删除" />
        <Sep />
        <Tool icon="copy2" label="复制" />
        <Tool icon="mirror" label="镜像" />
        <Sep />
        <Tool icon="move" label="移动" />
        <Tool icon="rotate" label="旋转" />
        <Sep />
        <Tool icon="extend" label="延伸" />
        <Tool icon="trim" label="修剪" />
        <Sep />
        <Tool icon="breakIcon" label="打断" />
        <Tool icon="merge" label="合并" />
        <Tool icon="split" label="分割" off />
        <Sep />
        <Tool icon="align" label="对齐" arrow="tight" />
        <Tool icon="offset" label="偏移" />
        <Tool icon="stretch" label="拉伸" />
        <Sep />
        <Tool icon="grip" label="设置夹点" off />
      </Strip>
      <div className="flex h-[29px] gap-1">
        <Strip className="w-[567px] shrink-0 gap-[7px] pr-[3px] pl-1">
          <Grip />
          <div className="-mr-px -ml-[2px] flex gap-[3px]">
            <Combo label="楼层" value="首层" className="w-[57px]" />
            <Combo label="构件分类" value="常用构件类" className="w-[69px]" />
            <Combo label="构件类型" value="梁" className="w-[69px]" />
            <Combo label="构件" value="KL-1" className="w-[69px]" />
            <Combo label="分层" value="分层1" className="w-[69px]" />
          </div>
          <Sep />
          <Tool icon="props" label="属性" on />
          <Tool icon="editBar" label="编辑钢筋" on />
          <More />
        </Strip>
        <Strip className="flex-1 gap-[7px] pr-[2px] pl-[2px]">
          <Grip />
          <Tool icon="axisTwo" label="两点" />
          <Tool icon="axisParallel" label="平行" />
          <Tool icon="axisAngle" label="点角" arrow="wide" />
          <Tool icon="axisArc" label="三点辅轴" arrow="wide" />
          <More />
        </Strip>
      </div>
      <div className="flex h-[29px] gap-1">
        <Strip className="flex-1 gap-[7px] pr-[2px] pl-1">
          <Grip />
          <Tool icon="pointer" label="选择" arrow="wide" />
          <Sep />
          <Tool icon="line" label="直线" />
          <Tool icon="pointLen" label="点加长度" />
          <Tool icon="arc3" label="三点画弧" arrow="wide" />
          <Combo label="圆弧半径" value="" className="-mr-px -ml-1 w-[54px]" />
          <Tool icon="rect" label="矩形" />
          <Sep />
          <Tool icon="smart" label="智能布置" arrow="tight" />
          <Sep />
          <Tool icon="beamEdit" label="修改梁段属性" />
          <Tool icon="inPlace" label="原位标注" arrow="wide" />
          <Tool icon="respan" label="重提梁跨" arrow="wide" />
          <More />
        </Strip>
        <Strip className="w-[32px] pl-1">
          <Grip />
        </Strip>
      </div>
    </>
  );
}

const AXES = [
  { x: 50.5, no: "3" },
  { x: 214.5, no: "4" },
  { x: 378.5, no: "5" },
  { x: 541.5, no: "6" },
  { x: 705.5, no: "7" },
];

function Canvas() {
  return (
    <div className="h-[137px] shrink-0 overflow-hidden bg-black">
      <svg width="100%" height="137" className="block font-['Open_Sans',sans-serif]" role="img" aria-label="梁平面图">
        <rect x="0" y="26" width="597" height="11" fill="#0078f0" />
        <rect x="597" y="26" width="108" height="11" fill="#b8b8b8" />
        <path d="M105 0v26" stroke="#fff" strokeWidth="2" />
        <path d="M105 26v5" stroke="#d08030" strokeWidth="2" />
        <text x="106" y="6" fontSize="5" fill="#a0a0a0" className="font-['DejaVu_Sans_Mono',monospace]">
          C8@100/200[4] 2C25 4C25
        </text>
        <circle cx="13" cy="31.500" r="12.500" fill="none" stroke="#009000" />
        <text x="13" y="37" fontSize="16" textAnchor="middle" fill="#c8b8a8">
          F
        </text>
        <path d="M0 31.500h705" stroke="#f01020" />
        {AXES.map((a) => (
          <g key={a.no}>
            <path d={`M${a.x} 0v137`} stroke="#f00000" />
            <circle cx={a.x} cy="124" r="12.500" fill="none" stroke="#009000" />
            <text x={a.x + 1} y="130" fontSize="16" textAnchor="middle" fill="#e4e4e4">
              {a.no}
            </text>
          </g>
        ))}
        <path d="M53 88V50h-2l4-12 4 12h-2v38z" fill="#00ff00" />
        <path d="M55 85.500h37v-3l12 4.500-12 4.500v-3H55z" fill="#ff0000" />
        <path d="M64.500 41l4.500 4 4.500-4M69 45v5" stroke="#00ff00" fill="none" />
        <path d="M92 66.500l9 9M101 66.500l-9 9" stroke="#ff0000" fill="none" />
        <path d="M596.500 17L609 39h-25z" fill="#ffff00" />
      </svg>
    </div>
  );
}

function OffsetField({ axis }: { axis: string }) {
  return (
    <label className="flex shrink-0 items-center gap-[3px] text-[#7b7b7b]">
      {axis}=
      <span className="ml-px flex h-[23px] w-[58px] items-center border border-[#777]">
        <input defaultValue="0" className="min-w-0 flex-1 bg-transparent text-right outline-none" />
        <span className="ml-[6px] flex w-[14px] shrink-0 flex-col items-center gap-[3px]">
          <Caret d="M3.500 2L6 5H1z" />
          <Caret d="M3.500 5L1 2h5z" />
        </span>
      </span>
      mm
    </label>
  );
}

function SnapBar() {
  return (
    <div className="flex h-[30px] shrink-0 gap-[3px]">
      <Strip className="shrink-0 gap-[7px] pr-[6px] pl-1">
        <Grip />
        <Tool icon="ortho" label="正交" />
        <Tool icon="snap" label="对象捕捉" on />
        <Tool icon="dynInput" label="动态输入" on />
      </Strip>
      <Strip className="shrink-0 gap-[7px] pr-[6px] pl-px">
        <Grip />
        <Tool icon="cross" label="交点" />
        <Tool icon="perp" label="垂点" on />
        <Tool icon="mid" label="中点" on />
        <Tool icon="vertex" label="顶点" />
        <Tool icon="coord" label="坐标" />
      </Strip>
      <Strip className="flex-1 gap-1 pr-1 pl-px">
        <Grip />
        <Combo label="偏移方式" value="不偏移" className="w-[58px]" />
        <Sep />
        <OffsetField axis="X" />
        <OffsetField axis="Y" />
        <Sep />
        <label className="flex shrink-0 items-center gap-2">
          <input type="checkbox" className="h-[11px] w-[11px] appearance-none border border-[#8f8f8f] bg-[#f4f4f4]" />
          旋转
        </label>
        <More />
      </Strip>
    </div>
  );
}

function RebarBar() {
  return (
    <Strip className="h-[26px] shrink-0 gap-[7px] pl-1">
      <IconButton icon="first" label="首行" />
      <IconButton icon="prev" label="上一行" />
      <IconButton icon="next" label="下一行" />
      <IconButton icon="last" label="末行" />
      <Sep />
      <IconButton icon="up" label="上移" />
      <IconButton icon="down" label="下移" />
      <Sep />
      <Tool icon="insert" label="插入" off />
      <Tool icon="removeRow" label="删除" off />
      <Tool icon="scaleBar" label="缩尺配筋" />
      <Tool icon="barInfo" label="钢筋信息" />
      <Tool icon="library" label="钢筋图库" />
      <Tool icon="other" label="其他" arrow="tight" />
      <button type="button" className="mr-px shrink-0">
        关闭
      </button>
      <Sep />
      <span className="whitespace-nowrap">单构件钢筋总重(kg)：438.132</span>
    </Strip>
  );
}

const SHAPE_TEXT = "font-['DejaVu_Sans_Mono',monospace] text-[10px]";

const StirrupShape = () => (
  <svg width="200" height="40" className="block" role="img" aria-label="箍筋">
    <path d="M82 11h32v21H82zM103 17l9-6M109 23l6-8" stroke="#000" strokeWidth="2" fill="none" />
    <text x="54" y="27" className={SHAPE_TEXT}>510</text>
    <text x="83" y="29" className={SHAPE_TEXT} fill="#f00000">81</text>
  </svg>
);

const HookShape = () => (
  <svg width="200" height="28" className="block" role="img" aria-label="单弯钩">
    <path d="M62 10V6l-3 1-1 2v9l2 2h87" stroke="#000" strokeWidth="2" fill="none" />
    <text x="34" y="19" className={SHAPE_TEXT}>100</text>
    <text x="85" y="17" className={SHAPE_TEXT}>200</text>
  </svg>
);

const DoubleHookShape = () => (
  <svg width="200" height="41" className="block" role="img" aria-label="双弯钩">
    <path d="M35 14v-3l-3 1-1 2v15l2 1h138v4h-4" stroke="#000" strokeWidth="2" fill="none" />
    <text x="10" y="23" className={SHAPE_TEXT}>100</text>
    <text x="82" y="24" className={SHAPE_TEXT}>200</text>
  </svg>
);

const CELL = "border-r border-b border-[#bdbdbd] p-0";

type Bar = {
  no: string;
  height: string;
  name: string;
  dia: string;
  shapeNo: string;
  shape: ReactNode;
  formula: ReactNode;
  length: string;
  next: string;
};

const BARS: Bar[] = [
  {
    no: "4",
    height: "h-[41px]",
    name: "1跨.箍筋2",
    dia: "8",
    shapeNo: "195",
    shape: <StirrupShape />,
    formula: "2*(((200-2*20-2*d-25)/3*1+25+2*d)+(550-2*20))+2*(11.9*d)",
    length: "1372",
    next: "7",
  },
  {
    no: "5",
    height: "h-[29px]",
    name: "1跨.其他箍筋1",
    dia: "10",
    shapeNo: "27",
    shape: <HookShape />,
    formula: (
      <>
        200+100+
        <span className="relative">
          6.25*d
          <span className="absolute -top-[3px] -right-[11px] -bottom-[3px] -left-[3px] border-[3px] border-[#f41df0]" />
        </span>
      </>
    ),
    length: "363",
    next: "6",
  },
  {
    no: "6",
    height: "h-[42px]",
    name: "1跨.其他箍筋2",
    dia: "10",
    shapeNo: "20",
    shape: <DoubleHookShape />,
    formula: (
      <>
        200+100+2*
        <span className="relative">
          6.25*d
          <span className="absolute -top-[6px] -right-4 -bottom-[7px] -left-[3px] border-[3px] border-[#f41df0]" />
        </span>
      </>
    ),
    length: "425",
    next: "6",
  },
];

function RebarTable() {
  const head = "border-r border-b border-[#bdbdbd] bg-linear-to-b from-white to-[#f0f0f0] p-0 font-normal whitespace-nowrap";
  return (
    <table className="w-full table-fixed border-separate border-spacing-0 bg-white leading-[14px]">
      <colgroup>
        <col className="w-[33px]" />
        <col className="w-[73px]" />
        <col className="w-[56px]" />
        <col className="w-[36px]" />
        <col className="w-[33px]" />
        <col className="w-[201px]" />
        <col className="w-[166px]" />
        <col />
        <col className="w-[61px]" />
        <col className="w-[8px]" />
      </colgroup>
      <thead>
        <tr className="h-[19px]">
          <th className={head} />
          <th className={head}>筋号</th>
          <th className={head}><GridText text="直径(mm)" /></th>
          <th className={head}>级别</th>
          <th className={head}>图号</th>
          <th className={head}>图形</th>
          <th className="border-r border-b border-[#bdbdbd] bg-linear-to-b from-[#fbdba1] to-[#f1c15f] p-0 font-normal text-[#5c0045]">
            计算公式
          </th>
          <th className={head}>公式描述</th>
          <th className={head}><GridText text="长度(mm)" /></th>
          <th className={`${head} overflow-hidden`}>:</th>
        </tr>
      </thead>
      <tbody>
        {BARS.map((bar) => (
          <tr key={bar.no} className={`bg-[#ccffd9] ${bar.height}`}>
            <th className={`${head} text-center`}><GridText text={bar.no} /></th>
            <td className="border-r border-b border-r-black border-b-[#bdbdbd] py-0 pr-2 pl-[2px] break-all">
              <GridText text={bar.name} />
            </td>
            <td className={`${CELL} pl-[2px]`}><GridText text={bar.dia} /></td>
            <td className={`${CELL} text-center`}><Grade /></td>
            <td className={`${CELL} pl-[2px]`}><GridText text={bar.shapeNo} /></td>
            <td className={CELL}>{bar.shape}</td>
            <td className="border-r border-b border-[#bdbdbd] py-0 pr-1 pl-px font-['DejaVu_Sans_Mono',monospace] text-[10px] leading-3 break-all">
              {bar.formula}
            </td>
            <td className={CELL} />
            <td className={`${CELL} pl-[2px]`}><GridText text={bar.length} /></td>
            <td className={`${CELL} overflow-hidden border-r-0 pl-px`}><GridText text={bar.next} /></td>
          </tr>
        ))}
        <tr className="h-[19px]">
          <th className={head}><GridText text="7" /></th>
          <td className="border-r border-b border-r-black border-b-[#bdbdbd] p-0" />
          <td className={CELL} />
          <td className={CELL} />
          <td className={CELL} />
          <td className={CELL} />
          <td className={CELL} />
          <td className={CELL} />
          <td className={CELL} />
          <td className={`${CELL} border-r-0`} />
        </tr>
      </tbody>
    </table>
  );
}

function RebarPanel() {
  return (
    <section className="flex min-h-0 flex-1 pt-1">
      <div className="mr-[3px] ml-px flex w-[9px] shrink-0 flex-col gap-[3px]">
        <svg width="10" height="10" viewBox="0 0 10 10" className="shrink-0" aria-hidden="true">
          <rect x=".500" y=".500" width="9" height="9" fill="#fff" stroke="#555" />
          <path d="M2 3l6 5M8 3L2 8" stroke="#444" strokeWidth="1.500" />
          <path d="M0 1.500h10" stroke="#a04848" strokeWidth="2" />
        </svg>
        <div className="ml-[2px] flex-1 bg-[radial-gradient(circle_at_1px_1px,#b4b4b4_1px,transparent_1px)] bg-[length:4px_5px]" />
      </div>
      <div className="mr-[2px] flex min-w-0 flex-1 flex-col">
        <RebarBar />
        <div className="mt-px flex min-h-0 flex-1 flex-col border-x border-t border-[#a0a0a0]">
          <div className="flex shrink-0">
            <div className="min-w-0 flex-1 overflow-hidden">
              <RebarTable />
            </div>
            <div className="ml-px flex w-[15px] shrink-0 flex-col items-center bg-[#ececec]">
              <span className="flex h-[19px] items-center">
                <Caret d="M3.500 2L7 5.500H0z" />
              </span>
              <span className="mt-auto flex h-[41px] w-full items-center justify-center rounded-xs border border-[#979797] bg-linear-to-r from-[#f5f5f5] to-[#cfcfcf]">
                <ThumbLines vertical />
              </span>
              <span className="flex h-[17px] items-center">
                <Caret d="M3.500 5L0 1.500h7z" />
              </span>
            </div>
          </div>
          <div className="mt-[3px] flex h-[15px] shrink-0 items-center bg-[#ececec] pl-[5px]">
            <Caret d="M1.500 3.500L5 0v7z" />
            <span className="ml-[6px] flex h-full w-[300px] items-center justify-center rounded-xs border border-[#979797] bg-linear-to-b from-[#f3f3f3] to-[#d0d0d0]">
              <ThumbLines />
            </span>
            <span className="mr-[22px] ml-auto">
              <Caret d="M5.500 3.500L2 0v7z" />
            </span>
          </div>
        </div>
      </div>
    </section>
  );
}

export default function App() {
  return (
    <div className="flex h-screen flex-col overflow-hidden bg-[#f0f0f0] font-['Open_Sans','Noto_Sans_CJK_SC',sans-serif] text-xs leading-4 text-black">
      <TitleBar />
      <div className="flex min-h-0 flex-1 flex-col border-r-[3px] border-[#bcd3ec]">
        <MenuBar />
        <MainToolbar />
        <main className="flex min-h-0 flex-1 pt-px">
          <LeftPanels />
          <div className="-mt-px flex min-w-0 flex-1 flex-col">
            <EditToolbars />
            <Canvas />
            <SnapBar />
            <RebarPanel />
          </div>
        </main>
      </div>
    </div>
  );
}
